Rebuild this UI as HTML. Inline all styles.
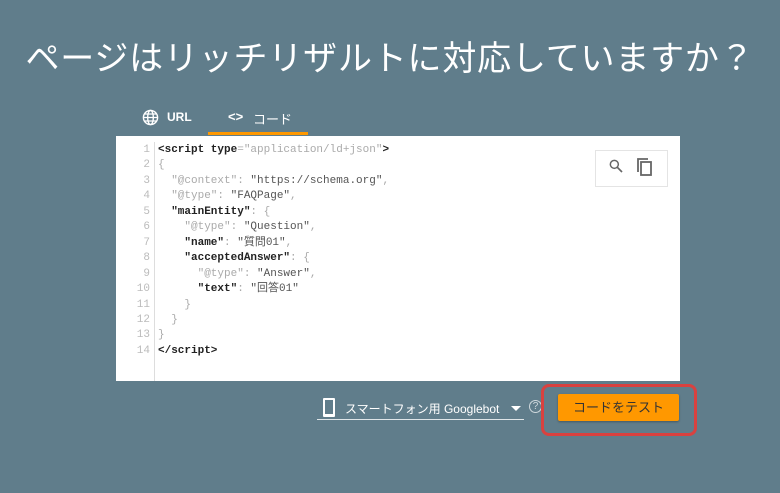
<!DOCTYPE html>
<html><head><meta charset="utf-8"><style>
body{margin:0;width:780px;height:493px;background:#607d8b;font-family:"Liberation Sans","Noto Sans CJK JP",sans-serif;position:relative;overflow:hidden}
.a{position:absolute}
h1{position:absolute;left:0;width:780px;top:31px;margin:0;text-align:center;color:#fff;font-weight:400;font-size:34px;letter-spacing:0.8px}
.box{left:116px;top:136px;width:564px;height:245px;background:#fff}
.gut{left:154px;top:142px;width:1px;height:239px;background:#ddd}
.ln{left:126px;top:143px;width:24px;text-align:right;color:#bbb;font:11px/15.45px "Liberation Mono","Noto Sans CJK JP",monospace}
.code{left:158px;top:143px;color:#aaa;font:11px/15.45px "Liberation Mono","Noto Sans CJK JP",monospace;white-space:pre}
.code b{color:#555;font-weight:normal}
.k{color:#222;font-weight:bold}
</style></head><body>
<h1>ページはリッチリザルトに対応していますか？</h1>
<svg class="a" style="left:142px;top:109px" width="17" height="17" viewBox="0 0 24 24"><circle cx="12" cy="12" r="10" fill="none" stroke="#fff" stroke-width="2"/><ellipse cx="12" cy="12" rx="4" ry="10" fill="none" stroke="#fff" stroke-width="2"/><path d="M2 12h20M4 7h16M4 17h16" stroke="#fff" stroke-width="1.8"/></svg>
<div class="a" style="left:167px;top:110px;color:#fff;font-size:12px;font-weight:bold">URL</div>
<div class="a" style="left:228px;top:109px;color:#fff;font-size:13px;font-weight:bold">&lt;&gt;</div>
<div class="a" style="left:253px;top:109px;color:#fff;font-size:13px">コード</div>
<div class="a" style="left:208px;top:132px;width:100px;height:3px;background:#ff9800"></div>
<div class="a box"></div>
<div class="a gut"></div>
<div class="a ln">1<br>2<br>3<br>4<br>5<br>6<br>7<br>8<br>9<br>10<br>11<br>12<br>13<br>14</div>
<div class="a code"><span class="k">&lt;script type</span>="application/ld+json"<span class="k">&gt;</span>
{
  "@context": <b>"https://schema.org"</b>,
  "@type": <b>"FAQPage"</b>,
  <span class="k">"mainEntity"</span>: {
    "@type": <b>"Question"</b>,
    <span class="k">"name"</span>: <b>"質問01"</b>,
    <span class="k">"acceptedAnswer"</span>: {
      "@type": <b>"Answer"</b>,
      <span class="k">"text"</span>: <b>"回答01"</b>
    }
  }
}
<span class="k">&lt;/script&gt;</span></div>
<div class="a" style="left:595px;top:150px;width:71px;height:35px;border:1px solid #e4e4e4;background:#fff"></div>
<svg class="a" style="left:608px;top:158px" width="16" height="16" viewBox="0 0 24 24"><circle cx="9.5" cy="9.5" r="6" fill="none" stroke="#666" stroke-width="2.2"/><path d="M14 14l7 7" stroke="#666" stroke-width="2.5"/></svg>
<svg class="a" style="left:636px;top:157px" width="17" height="19" viewBox="0 0 17 19"><path d="M2 15V2h10" fill="none" stroke="#666" stroke-width="1.8"/><rect x="5" y="5" width="10" height="13" fill="none" stroke="#666" stroke-width="1.8"/></svg>
<div class="a" style="left:323px;top:398px;width:8px;height:14px;border:2px solid #fff;border-bottom-width:3px;border-radius:1px"></div>
<div class="a" style="left:345px;top:400px;color:#fff;font-size:12px">スマートフォン用 Googlebot</div>
<div class="a" style="left:511px;top:406px;width:0;height:0;border-left:5px solid transparent;border-right:5px solid transparent;border-top:5px solid #fff"></div>
<div class="a" style="left:317px;top:419px;width:207px;height:1px;background:#dfe5e8"></div>
<div class="a" style="left:529px;top:400px;width:11px;height:11px;border:1px solid #cfd8dc;border-radius:50%;color:#cfd8dc;font-size:10px;line-height:11px;text-align:center">?</div>
<div class="a" style="left:558px;top:394px;width:121px;height:27px;background:#ff9800;border-radius:2px;box-shadow:0 1px 2px rgba(0,0,0,.3);color:#333;font-size:13px;line-height:27px;text-align:center">コードをテスト</div>
<div class="a" style="left:541px;top:384px;width:150px;height:46px;border:3.5px solid #d9413f;border-radius:8px"></div>
</body></html>
